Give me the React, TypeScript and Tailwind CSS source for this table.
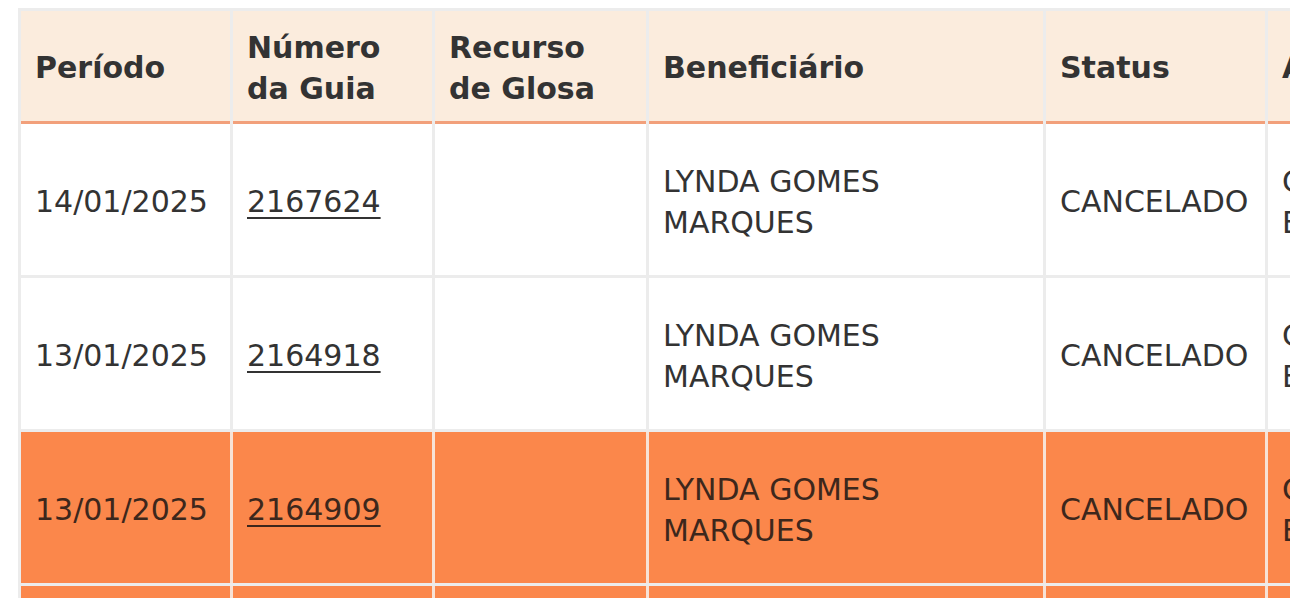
import React from 'react';

type Guia = {
    periodo: string;
    numero: string;
    recurso: string;
    beneficiario: string;
    status: string;
    atendimento: string;
    destaque?: boolean;
};

const guias: Guia[] = [
    { periodo: '14/01/2025', numero: '2167624', recurso: '', beneficiario: 'LYNDA GOMES MARQUES', status: 'CANCELADO', atendimento: 'CONSULTA ELETIVA' },
    { periodo: '13/01/2025', numero: '2164918', recurso: '', beneficiario: 'LYNDA GOMES MARQUES', status: 'CANCELADO', atendimento: 'CONSULTA ELETIVA' },
    { periodo: '13/01/2025', numero: '2164909', recurso: '', beneficiario: 'LYNDA GOMES MARQUES', status: 'CANCELADO', atendimento: 'CONSULTA ELETIVA', destaque: true },
    { periodo: '10/01/2025', numero: '2159870', recurso: '', beneficiario: 'LYNDA GOMES MARQUES', status: 'AUTORIZADO', atendimento: 'CONSULTA ELETIVA', destaque: true },
];

const cols = 'grid grid-cols-[209px_199px_211px_394px_219px_300px] gap-x-[3px]';

function HeaderCell({ children }: { children: React.ReactNode }) {
    return (
        <div className="flex h-[113px] items-center border-b-[3px] border-[#f2a07b] bg-[#fbecdd] pl-[14px] pt-[3px] font-bold">
            <div>{children}</div>
        </div>
    );
}

function Cell({ children, destaque }: { children?: React.ReactNode; destaque?: boolean }) {
    return (
        <div className={`flex h-[151px] items-center pl-[14px] pr-[12px] pt-[4px] ${destaque ? 'bg-[#fb874b] text-[#3d271c]' : 'bg-white text-[#333333]'}`}>
            <div>{children}</div>
        </div>
    );
}

export default function App() {
    return (
        <div className="h-[598px] w-[1290px] overflow-hidden bg-white pl-[18px] pt-[8px] font-['DejaVu_Sans',sans-serif] text-[30px] leading-[41px] text-[#333333]">
            <div className="w-max bg-[#ececec] pl-[3px] pt-[3px]">
                <div className={cols}>
                    <HeaderCell>Período</HeaderCell>
                    <HeaderCell>
                        Número
                        <br />
                        da Guia
                    </HeaderCell>
                    <HeaderCell>
                        Recurso
                        <br />
                        de Glosa
                    </HeaderCell>
                    <HeaderCell>Beneficiário</HeaderCell>
                    <HeaderCell>Status</HeaderCell>
                    <HeaderCell>Atendimento</HeaderCell>
                </div>
                <div className="flex flex-col gap-y-[3px]">
                    {guias.map((g, i) => (
                        <div key={i} className={`${cols} ${g.destaque ? 'bg-[#f7e2d6]' : 'bg-[#ececec]'}`}>
                            <Cell destaque={g.destaque}>{g.periodo}</Cell>
                            <Cell destaque={g.destaque}>
                                <a href="#" className="underline decoration-2 underline-offset-[5px]">
                                    {g.numero}
                                </a>
                            </Cell>
                            <Cell destaque={g.destaque}>{g.recurso}</Cell>
                            <Cell destaque={g.destaque}>
                                <div className="w-[240px]">{g.beneficiario}</div>
                            </Cell>
                            <Cell destaque={g.destaque}>{g.status}</Cell>
                            <Cell destaque={g.destaque}>
                                <div className="w-[220px]">{g.atendimento}</div>
                            </Cell>
                        </div>
                    ))}
                </div>
            </div>
        </div>
    );
}
